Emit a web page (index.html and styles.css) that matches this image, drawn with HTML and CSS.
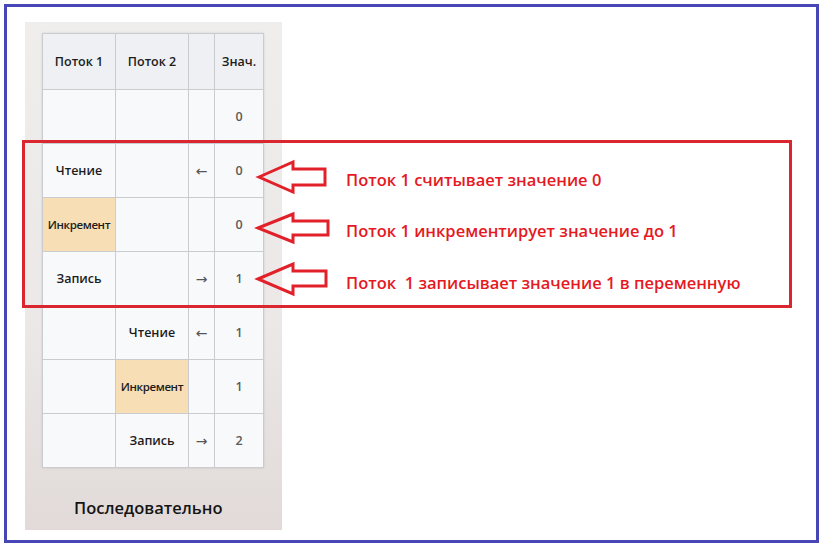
FILE: index.html
```html
<!DOCTYPE html>
<html lang="ru">
<head>
<meta charset="utf-8">
<title>Последовательно</title>
<link rel="stylesheet" href="styles.css">
</head>
<body>
<div class="frame">
  <div class="panel">
    <table class="grid">
      <thead>
        <tr><th>Поток 1</th><th>Поток 2</th><th></th><th>Знач.</th></tr>
      </thead>
      <tbody>
        <tr><td></td><td></td><td></td><td class="num">0</td></tr>
        <tr><td>Чтение</td><td></td><td class="dir">←</td><td class="num">0</td></tr>
        <tr><td class="hl">Инкремент</td><td></td><td></td><td class="num">0</td></tr>
        <tr><td>Запись</td><td></td><td class="dir">→</td><td class="num">1</td></tr>
        <tr><td></td><td>Чтение</td><td class="dir">←</td><td class="num">1</td></tr>
        <tr><td></td><td class="hl">Инкремент</td><td></td><td class="num">1</td></tr>
        <tr><td></td><td>Запись</td><td class="dir">→</td><td class="num">2</td></tr>
      </tbody>
    </table>
    <div class="caption">Последовательно</div>
  </div>

  <div class="note">
    <div class="note-row">
      <svg class="arrow" viewBox="0 0 74 34" width="74" height="34"><polygon points="3,17 37,2 37,9 69,9 69,25 37,25 37,32" /></svg>
      <span class="note-text">Поток 1 считывает значение 0</span>
    </div>
    <div class="note-row">
      <svg class="arrow" viewBox="0 0 74 34" width="74" height="34"><polygon points="2,17 37,3 37,10 72,10 72,24 37,24 37,31" /></svg>
      <span class="note-text">Поток 1 инкрементирует значение до 1</span>
    </div>
    <div class="note-row">
      <svg class="arrow" viewBox="0 0 74 34" width="74" height="34"><polygon points="2,17 37,2 37,9 70,9 70,24 37,24 37,32" /></svg>
      <span class="note-text">Поток&nbsp; 1 записывает значение 1 в переменную</span>
    </div>
  </div>
</div>
</body>
</html>
```

FILE: styles.css
```css
html, body {
  margin: 0;
  padding: 0;
  background: #ffffff;
}

body {
  font-family: "Open Sans", "Noto Sans", sans-serif;
}

.frame {
  position: relative;
  box-sizing: border-box;
  margin: 4px 0 0 4px;
  width: 815px;
  height: 539px;
  border: 3px solid #4646b6;
  padding: 15px 0 0 18px;
}

.panel {
  box-sizing: border-box;
  width: 257px;
  height: 508px;
  padding: 11px 0 0 17px;
  background: linear-gradient(to bottom, #efeeed 0%, #ebe8e7 60%, #e1dad9 100%);
  display: flex;
  flex-direction: column;
}

.grid {
  border-collapse: collapse;
  table-layout: fixed;
  width: 221px;
  background: #f8f9fb;
  box-shadow: 0 0 2px rgba(0, 0, 0, 0.12);
}

.grid th,
.grid td {
  border: 1px solid #cbcccf;
  padding: 0;
  text-align: center;
  vertical-align: middle;
  font-size: 12.5px;
  font-weight: 600;
  color: #1c1c1c;
  white-space: nowrap;
  overflow: visible;
}

.grid th {
  height: 55px;
  background: #eef0f3;
}

.grid td {
  height: 53px;
}

.grid th:nth-child(1), .grid td:nth-child(1) { width: 72px; }
.grid th:nth-child(2), .grid td:nth-child(2) { width: 72px; }
.grid th:nth-child(3), .grid td:nth-child(3) { width: 25px; }
.grid th:nth-child(4), .grid td:nth-child(4) { width: 48px; }

.grid .num {
  color: #5a5a5a;
  font-size: 12.5px;
}

.grid .dir {
  color: #555555;
  font-family: "DejaVu Sans", sans-serif;
  font-weight: 400;
  font-size: 14px;
}

.grid .hl {
  background: #f8deb4;
  letter-spacing: -0.4px;
  font-size: 11.5px;
}

.caption {
  margin-top: 28px;
  margin-left: 32px;
  font-size: 16.5px;
  font-weight: 600;
  color: #141414;
}

.note {
  position: absolute;
  left: 15px;
  top: 133px;
  box-sizing: border-box;
  width: 770px;
  height: 168px;
  border: 3px solid #d9262f;
  padding-top: 8px;
  display: flex;
  flex-direction: column;
}

.note-row {
  height: 52px;
  display: flex;
  align-items: center;
  padding-left: 231px;
}

.arrow {
  flex: none;
  overflow: visible;
}

.arrow polygon {
  fill: none;
  stroke: #e2202a;
  stroke-width: 3;
  stroke-linejoin: miter;
}

.note-text {
  margin-left: 16px;
  margin-top: 6px;
  font-size: 16.5px;
  font-weight: 600;
  color: #e5191f;
  white-space: pre;
}
```
